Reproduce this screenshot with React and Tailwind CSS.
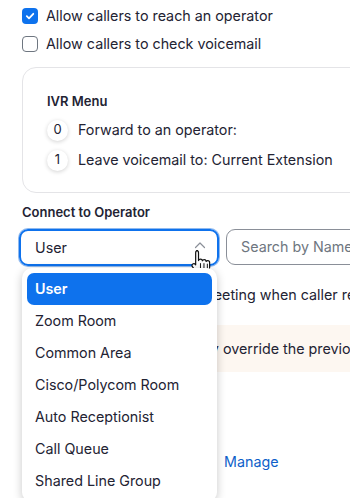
import React from 'react';

const options = ['User', 'Zoom Room', 'Common Area', 'Cisco/Polycom Room', 'Auto Receptionist', 'Call Queue', 'Shared Line Group'];

const Checkbox = ({ checked }) =>
    checked ? (
        <span className="flex h-[16px] w-[16px] shrink-0 items-center justify-center rounded-[4px] bg-[#0e72ed]">
            <svg width="10" height="10" viewBox="0 0 10 10" fill="none">
                <path d="M1.8 5.2 4 7.3 8.3 2.8" stroke="white" strokeWidth="1.8" strokeLinecap="round" strokeLinejoin="round" />
            </svg>
        </span>
    ) : (
        <span className="h-[16px] w-[16px] shrink-0 rounded-[4px] border border-[#6e7680] bg-white" />
    );

const Badge = ({ n }) => (
    <span className="flex h-[21px] w-[21px] shrink-0 items-center justify-center rounded-full bg-white text-[13px] text-[#232333] shadow-[0_1px_4px_rgba(0,0,0,0.18)]">
        {n}
    </span>
);

const HandCursor = () => (
    <svg width="24" height="29" viewBox="0 0 22 26" className="pointer-events-none absolute left-[169px] top-[17px]">
        <path
            d="M6 2.2c1 0 1.8.8 1.8 1.8v7.2c.3-.9 1-1.3 1.8-1.3 1 0 1.7.7 1.7 1.6.3-.7 1-1.1 1.7-1.1 1 0 1.7.7 1.8 1.6.3-.5.9-.8 1.5-.8 1 0 1.7.8 1.7 1.8v4.6c0 3.6-2.6 6.2-6 6.2H10c-2 0-3.3-.8-4.5-2.3L2.2 16.8c-.6-.8-.5-1.9.3-2.4.8-.6 1.8-.4 2.4.3l.3.4V4c0-1 .8-1.8 1.8-1.8Z"
            fill="white"
            stroke="#111"
            strokeWidth="1.1"
            strokeLinejoin="round"
        />
        <path d="M9.6 14v4.4M12.8 14v4.4M15.9 14.5v4" stroke="#111" strokeWidth="0.9" strokeLinecap="round" />
    </svg>
);

const App = () => {
    return (
        <div className="h-[498px] w-[350px] overflow-hidden bg-white text-[14.3px] text-[#232333]" style={{ fontFamily: 'Inter, "Liberation Sans", sans-serif' }}>
            <div className="px-[22px] pt-[6px]">
                {/* Options */}
                <div className="flex h-[20px] items-center gap-[8px]">
                    <Checkbox checked />
                    <span className="whitespace-nowrap">Allow callers to reach an operator</span>
                </div>
                <div className="mt-[8px] flex h-[20px] items-center gap-[8px]">
                    <Checkbox />
                    <span className="whitespace-nowrap">Allow callers to check voicemail</span>
                </div>

                {/* IVR card */}
                <div className="mt-[13px] w-[420px] rounded-[14px] border border-[#e4e4e7] pb-[20px] pl-[24px] pt-[23px]">
                    <div className="text-[13px] font-semibold leading-[20px]">IVR Menu</div>
                    <div className="mt-[7px] flex h-[24px] items-center gap-[10px]">
                        <Badge n="0" />
                        <span className="whitespace-nowrap">Forward to an operator:</span>
                    </div>
                    <div className="mt-[6px] flex h-[24px] items-center gap-[10px]">
                        <Badge n="1" />
                        <span className="whitespace-nowrap">Leave voicemail to: Current Extension</span>
                    </div>
                </div>

                {/* Connect to operator */}
                <div className="mt-[9px] text-[13px] font-semibold leading-[20px]">Connect to Operator</div>
                <div className="relative mt-[7px] flex gap-[7px]">
                    <div className="relative -ml-[3px] flex h-[37px] w-[200px] shrink-0 items-center justify-between rounded-[9px] border-2 border-[#0e72ed] pl-[14px] pr-[11px] shadow-[0_0_0_1px_#8fb9ef]">
                        <span>User</span>
                        <svg width="12" height="8" viewBox="0 0 12 8" fill="none" className="-mt-[5px]">
                            <path d="M1.5 6.5 6 2l4.5 4.5" stroke="#8a8f98" strokeWidth="1.2" strokeLinecap="round" strokeLinejoin="round" />
                        </svg>
                        <HandCursor />
                    </div>
                    <div className="flex h-[36px] w-[200px] shrink-0 items-center rounded-[9px] border border-[#8a8f98] pl-[14px] text-[#6e7680]">
                        <span className="whitespace-nowrap">Search by Name, Extension</span>
                    </div>

                    {/* Dropdown */}
                    <div className="absolute left-0 top-[39px] z-10 w-[195px] rounded-[10px] bg-white p-[5px] shadow-[0_2px_10px_rgba(0,0,0,0.22)]">
                        {options.map((o, i) => (
                            <div
                                key={o}
                                className={`flex h-[32px] items-center rounded-[7px] px-[8px] whitespace-nowrap ${i === 0 ? 'bg-[#0e72ed] font-semibold text-white' : ''}`}
                            >
                                {o}
                            </div>
                        ))}
                    </div>
                </div>

                {/* Content behind dropdown */}
                <div className="mt-[19px] flex h-[20px] items-center gap-[8px] whitespace-nowrap">
                    <Checkbox />
                    <span>Allow caller to join any meeting when caller reaches operator</span>
                </div>
                <div className="mt-[20px] flex h-[47px] w-[420px] items-center rounded-[8px] bg-[#fdf7f1] pl-[16px] whitespace-nowrap">
                    Tip: Changes set here may override the previous settings
                </div>
                <div className="mt-[80px] flex h-[20px] items-center whitespace-nowrap">
                    <span className="w-[202px]">Business Hours</span>
                    <span className="text-[#0e5fc9]">Manage</span>
                </div>
            </div>
        </div>
    );
};

export default App;
